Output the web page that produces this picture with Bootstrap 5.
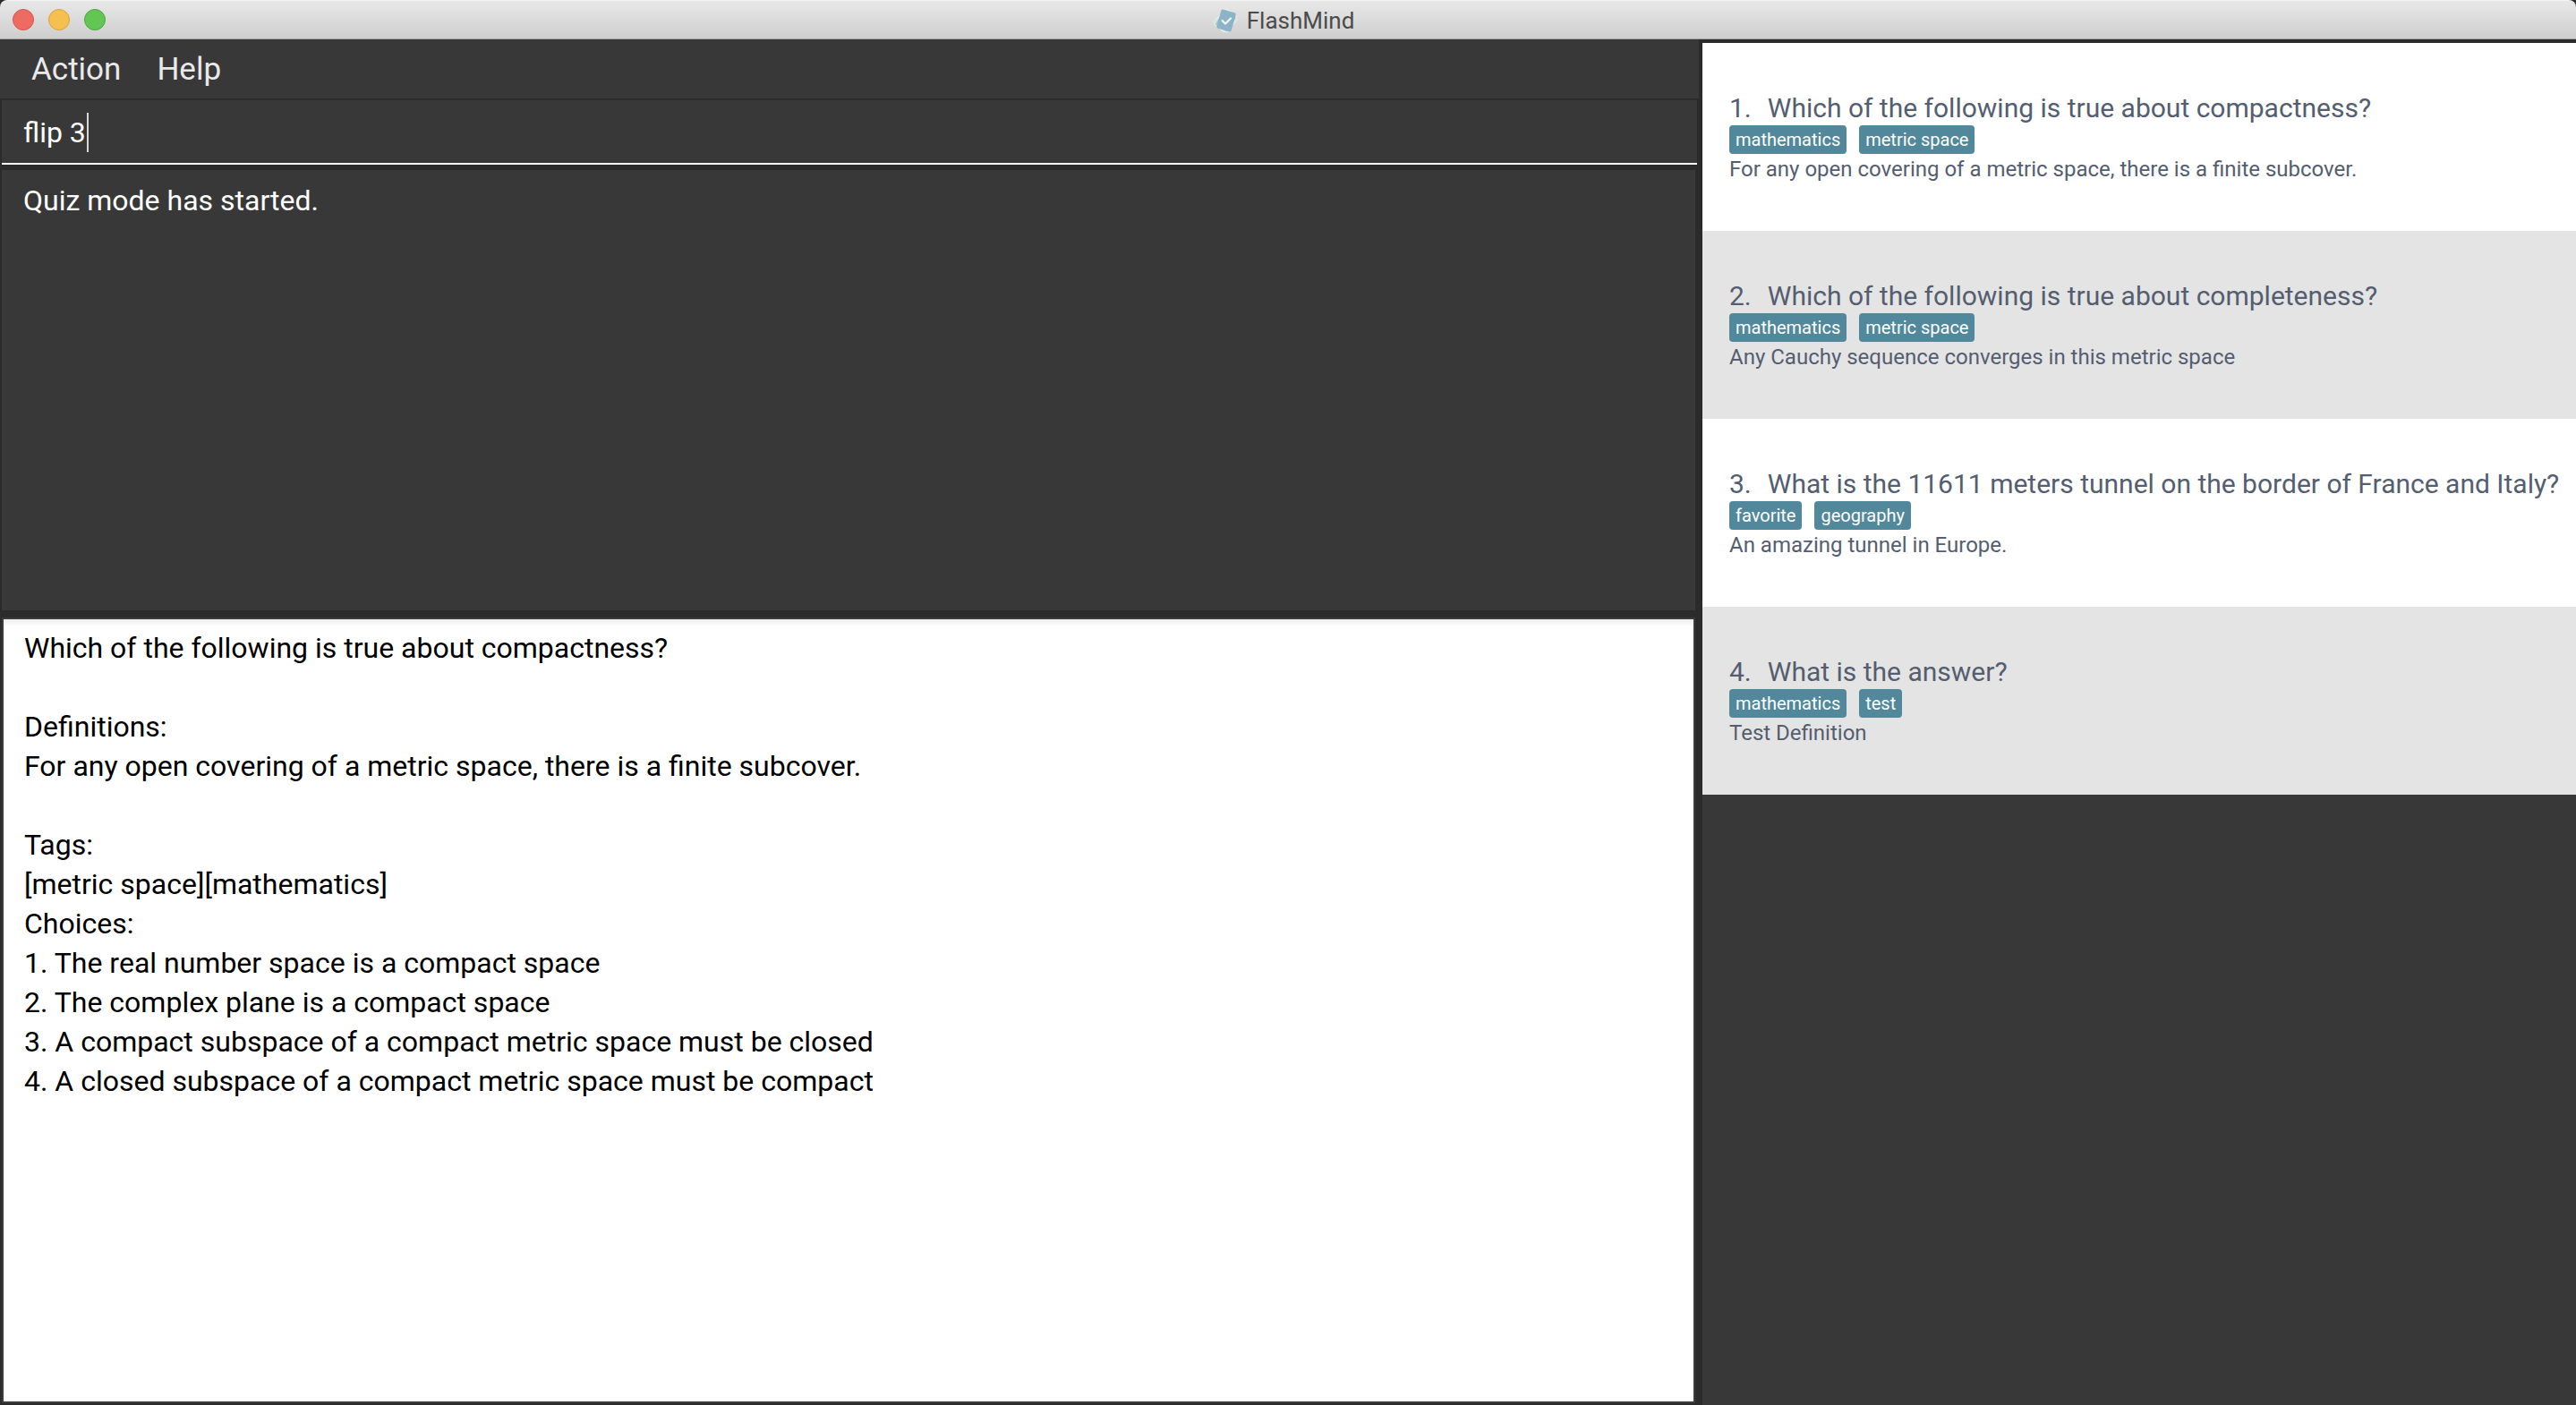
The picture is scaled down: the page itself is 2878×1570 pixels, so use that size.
<!DOCTYPE html>
<html lang="en">
<head>
<meta charset="utf-8">
<meta name="viewport" content="width=device-width, initial-scale=1">
<title>FlashMind</title>
<link href="https://cdn.jsdelivr.net/npm/bootstrap@5.3.0/dist/css/bootstrap.min.css" rel="stylesheet">
<style>
  :root { --panel: #383838; --gutter: #2b2b2b; --slate: #545e70; --teal: #51889b; }
  body { font-family: Roboto, "Liberation Sans", sans-serif; background: var(--gutter); }

  .titlebar {
    height: 44px;
    background: linear-gradient(#e8e8e8, #cecece);
    border-top: 1px solid #f4f4f4;
    border-bottom: 1px solid #a3a3a3;
    border-radius: 8px 8px 0 0;
  }
  .lights { gap: 16px; padding-left: 14px; }
  .light { width: 24px; height: 24px; padding: 0; border-radius: 50%; border: 1px solid; }
  .light-close { background: #ed6b60; border-color: #d9544c; }
  .light-min { background: #f5c04f; border-color: #dba13a; }
  .light-max { background: #62c655; border-color: #4aa73c; }
  .app-name { gap: 8px; padding: 2px 10px 0 0; font-size: 26px; line-height: 40px; color: #4b4b4b; font-weight: 400; }
  .app-icon { width: 30px; height: 30px; }

  .workspace { display: grid; grid-template-columns: minmax(0, 1902fr) minmax(0, 976fr); }

  .menubar { height: 68px; background: var(--panel); border-bottom: 2px solid var(--gutter); padding-left: 15px; margin-right: 4px; }
  .menu-btn { font-size: 35px; line-height: 64px; color: #e9e9e9; padding: 2px 20px 0; border: 0; background: none; }

  .command { height: 72px; margin: 0 6px 0 2px; background: var(--panel); border-bottom: 2px solid #fff; }
  .command-input { height: 70px; padding: 2px 24px 0; border: 0; background: none; color: #fff; font-size: 32px; outline: 0; }
  .caret { left: 95px; top: 14px; width: 2px; height: 44px; background: #d8d8d8; }

  .pane { display: block; resize: none; border: 0; outline: 0; font-size: 32px; line-height: 44px; }
  .result { flex: 466 1 0; margin: 6px 8px 8px 2px; padding: 12px 24px 14px; background: var(--panel); color: #fff; }
  .detail { flex: 852 1 0; margin: 0 8px 2px 2px; padding: 10px 23px 12px; color: #000;
    border: 2px solid #3b3b3b; background: linear-gradient(#ebebeb, #fff 8px); }

  .cards { margin-top: 4px; background: var(--panel); }
  .flashcard { padding: 55px 10px 51px 30px; background: #fff; color: var(--slate); }
  .flashcard:nth-child(even) { background: #e4e4e4; }
  .question { gap: 18px; padding-bottom: 1px; font-size: 30px; line-height: 36px; font-weight: 400; white-space: nowrap; }
  .tags { gap: 14px; }
  .topic { padding: 1px 7px; border-radius: 4px; background: var(--teal); color: #fff; font-size: 20px; line-height: 30px; }
  .answer { font-size: 24px; line-height: 35px; }
</style>
</head>
<body class="vh-100 d-flex flex-column overflow-hidden">
<header class="titlebar d-flex align-items-center flex-shrink-0">
  <div class="lights d-flex align-items-center flex-fill w-25">
    <button type="button" class="light light-close" aria-label="Close"></button>
    <button type="button" class="light light-min" aria-label="Minimize"></button>
    <button type="button" class="light light-max" aria-label="Zoom"></button>
  </div>
  <h1 class="app-name d-flex align-items-center m-0">
    <svg class="app-icon" viewBox="0 0 30 30" aria-hidden="true">
      <g stroke="#e6efef" stroke-width="1">
        <rect x="6" y="5" width="17" height="21" rx="2" fill="#b9d6d6" transform="rotate(48 15 15)"/>
        <rect x="6" y="5" width="17" height="21" rx="2" fill="#a9cdcd" transform="rotate(33 15 15)"/>
      </g>
      <rect x="6.500" y="4" width="17" height="22" rx="2" fill="#8db3c6" transform="rotate(16 15 15)"/>
      <path d="M10.500 15l3.500 3.500 6-6" fill="none" stroke="#f0f5f7" stroke-width="2.200" stroke-linecap="round" stroke-linejoin="round"/>
    </svg>
    FlashMind
  </h1>
  <div class="flex-fill w-25"></div>
</header>

<div class="workspace flex-fill">
  <main class="d-flex flex-column">
    <nav class="menubar d-flex" aria-label="Application menu">
      <button type="button" class="menu-btn">Action</button>
      <button type="button" class="menu-btn">Help</button>
    </nav>
    <form class="command position-relative">
      <input class="command-input w-100" type="text" value="flip 3" aria-label="Command">
      <span class="caret position-absolute"></span>
    </form>
    <textarea class="pane result" readonly aria-label="Result">Quiz mode has started.</textarea>
    <textarea class="pane detail" readonly aria-label="Flashcard details">Which of the following is true about compactness?

Definitions:
For any open covering of a metric space, there is a finite subcover.

Tags:
[metric space][mathematics]
Choices:
1. The real number space is a compact space
2. The complex plane is a compact space
3. A compact subspace of a compact metric space must be closed
4. A closed subspace of a compact metric space must be compact</textarea>
  </main>

  <aside class="cards">
    <ul class="list-unstyled m-0">
      <li class="flashcard">
        <h2 class="question d-flex m-0"><span>1.</span><span>Which of the following is true about compactness?</span></h2>
        <div class="tags d-flex"><span class="topic">mathematics</span><span class="topic">metric space</span></div>
        <p class="answer m-0">For any open covering of a metric space, there is a finite subcover.</p>
      </li>
      <li class="flashcard">
        <h2 class="question d-flex m-0"><span>2.</span><span>Which of the following is true about completeness?</span></h2>
        <div class="tags d-flex"><span class="topic">mathematics</span><span class="topic">metric space</span></div>
        <p class="answer m-0">Any Cauchy sequence converges in this metric space</p>
      </li>
      <li class="flashcard">
        <h2 class="question d-flex m-0"><span>3.</span><span>What is the 11611 meters tunnel on the border of France and Italy?</span></h2>
        <div class="tags d-flex"><span class="topic">favorite</span><span class="topic">geography</span></div>
        <p class="answer m-0">An amazing tunnel in Europe.</p>
      </li>
      <li class="flashcard">
        <h2 class="question d-flex m-0"><span>4.</span><span>What is the answer?</span></h2>
        <div class="tags d-flex"><span class="topic">mathematics</span><span class="topic">test</span></div>
        <p class="answer m-0">Test Definition</p>
      </li>
    </ul>
  </aside>
</div>
<script src="https://cdn.jsdelivr.net/npm/bootstrap@5.3.0/dist/js/bootstrap.bundle.min.js"></script>
</body>
</html>
